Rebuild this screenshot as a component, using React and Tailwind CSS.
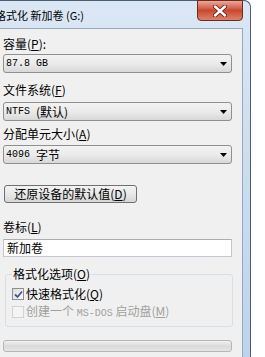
import React from 'react'

const cjk = { fontFamily: '"Noto Sans CJK SC", "Liberation Sans", sans-serif' }
const mono = { fontFamily: '"Liberation Mono", "Noto Sans CJK SC", monospace' }

function Label({ text, hot, tail = '', className = '' }) {
    return (
        <div className={`h-[16px] leading-[16px] text-[12px] text-black ${className}`} style={cjk}>
            {text}(<span className="underline">{hot}</span>){tail}
        </div>
    )
}

function Arrow() {
    return (
        <svg width="7" height="4" viewBox="0 0 7 4" className="mr-[4px]">
            <path d="M0 0 H7 L3.5 4 Z" fill="#000" />
        </svg>
    )
}

function Combo({ children, className = '' }) {
    return (
        <div className={`w-[229px] h-[19px] flex items-center justify-between rounded-[3px] border border-[#8e8f8f] bg-gradient-to-b from-[#f2f2f2] via-[#ebebeb] to-[#d8d8d8] pl-[2px] ${className}`}>
            <div className="flex items-center leading-[16px]">{children}</div>
            <Arrow />
        </div>
    )
}

function CheckRow({ checked, disabled, children, className = '' }) {
    return (
        <div className={`h-[16px] flex items-center gap-[2px] ${className}`}>
            <div className={`w-[12px] h-[12px] border flex items-center justify-center ${disabled ? 'border-[#d3d3d3] bg-[#f4f4f4]' : 'border-[#8f8f8f] bg-gradient-to-br from-[#dcdcdc] to-[#fbfbfb]'}`}>
                {checked && (
                    <svg width="9" height="9" viewBox="0 0 9 9">
                        <path d="M1 4.5 L3.5 7 L8 1.5" stroke="#3d5a9a" strokeWidth="1.8" fill="none" />
                    </svg>
                )}
            </div>
            <div className={`text-[12px] leading-[16px] ${disabled ? 'text-[#a0a0a0]' : 'text-black'}`} style={cjk}>
                {children}
            </div>
        </div>
    )
}

export default function App() {
    return (
        <div className="w-[265px] h-[357px] bg-white flex overflow-hidden">
            {/* window frame */}
            <div className="w-[251px] h-[370px] flex flex-col rounded-tr-[7px] border-r border-t border-[#4b5d74] bg-gradient-to-b from-[#dbe7f4] via-[#cbdcef] to-[#bcd3eb]">
                {/* title bar */}
                <div className="h-[27px] flex justify-between items-start">
                    <div className="ml-[-5px] mt-[7px] text-[11px] leading-[14px] text-black" style={cjk}>
                        格式化 新加卷 (G:)
                    </div>
                    <div className="mr-[7px] mt-[-1px] w-[46px] h-[21px] rounded-b-[4px] border border-[#6e2a20] bg-gradient-to-b from-[#e9a99a] via-[#c9472f] to-[#d9826c] flex items-center justify-center">
                        <svg width="14" height="12" viewBox="0 0 14 12">
                            <path d="M2 1.5 L12 10.5 M12 1.5 L2 10.5" stroke="#5a1a12" strokeWidth="4" strokeLinecap="round" />
                            <path d="M2 1.5 L12 10.5 M12 1.5 L2 10.5" stroke="#ffffff" strokeWidth="2.4" strokeLinecap="round" />
                        </svg>
                    </div>
                </div>

                {/* body */}
                <div className="flex flex-1">
                    <div className="w-[243px] bg-[#f0f0f0] border-t border-r border-[#95a9c2] pl-[3px] pt-[7px] flex flex-col">
                        <Label text="容量" hot="P" tail=":" />
                        <Combo className="mt-[2px]">
                            <span className="text-[10px]" style={mono}>87.8 GB</span>
                        </Combo>

                        <Label text="文件系统" hot="F" className="mt-[9px]" />
                        <Combo className="mt-[4px]">
                            <span className="text-[10px]" style={mono}>NTFS&nbsp;</span>
                            <span className="text-[12px]" style={cjk}>(默认)</span>
                        </Combo>

                        <Label text="分配单元大小" hot="A" className="mt-[5px]" />
                        <Combo className="mt-[3px]">
                            <span className="text-[10px]" style={mono}>4096&nbsp;</span>
                            <span className="text-[12px]" style={cjk}>字节</span>
                        </Combo>

                        <button className="mt-[21px] ml-[1px] w-[133px] h-[18px] rounded-[3px] border border-[#707070] bg-gradient-to-b from-[#f3f3f3] via-[#e8e8e8] to-[#d6d6d6] text-[12px] leading-[16px] text-black" style={cjk}>
                            还原设备的默认值(<span className="underline">D</span>)
                        </button>

                        <Label text="卷标" hot="L" className="mt-[16px]" />
                        <div className="mt-[4px] w-[229px] h-[18px] bg-white border border-[#c5c9cf] border-t-[#abadb3] pl-[3px] text-[12px] leading-[16px] text-black" style={cjk}>
                            新加卷
                        </div>

                        <fieldset className="mt-[9px] ml-[2px] w-[228px] border border-[#d5dfe5] rounded-[3px] pl-[6px] pb-[6px]">
                            <legend className="px-[1px] text-[12px] leading-[16px] text-black" style={cjk}>
                                格式化选项(<span className="underline">O</span>)
                            </legend>
                            <CheckRow checked className="mt-[4px]">
                                快速格式化(<span className="underline">Q</span>)
                            </CheckRow>
                            <CheckRow disabled className="mt-[2px]">
                                创建一个 <span className="text-[10px]" style={mono}>MS-DOS</span> 启动盘(<span className="underline">M</span>)
                            </CheckRow>
                        </fieldset>

                        <div className="mt-[13px] w-[229px] h-[12px] rounded-[3px] border border-[#b6b6b6] bg-gradient-to-b from-[#f2f2f2] via-[#dadada] to-[#e6e6e6]" />
                    </div>
                </div>
            </div>
        </div>
    )
}
